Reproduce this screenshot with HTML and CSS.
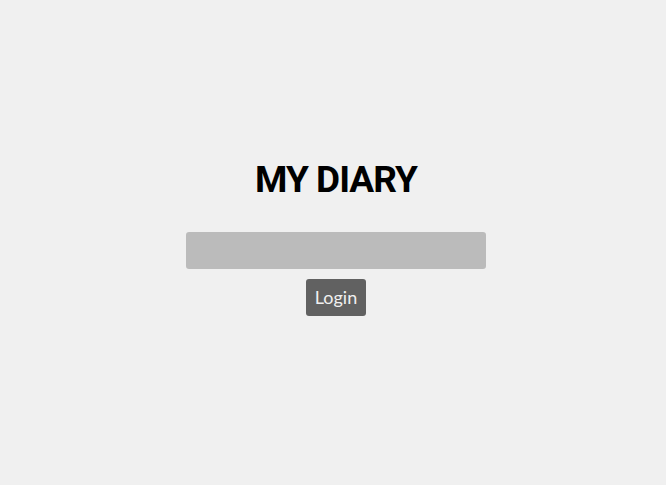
FILE: index.html
```html
<!DOCTYPE html>
<html>
<head>
<meta charset="utf-8">
<link rel="stylesheet" href="styles.css">
</head>
<body>
<main class="page">
  <h1 class="title">MY DIARY</h1>
  <form class="login">
    <input class="password" type="password">
    <button class="btn" type="button">Login</button>
  </form>
</main>
</body>
</html>
```
FILE: styles.css
```css
html, body {
  margin: 0;
  padding: 0;
  background: #f0f0f0;
  height: 100%;
}
.page {
  height: 485px;
  box-sizing: border-box;
  padding: 0 0 12px 6px;
  display: flex;
  flex-direction: column;
  align-items: center;
  justify-content: center;
  font-family: "Roboto", "Noto Sans", sans-serif;
}
.title {
  margin: 0 0 30px;
  font-size: 37px;
  font-weight: 700;
  line-height: 44px;
  color: #000;
  letter-spacing: -1px;
}
.login {
  display: flex;
  flex-direction: column;
  align-items: center;
  gap: 10px;
}
.password {
  width: 300px;
  height: 37px;
  box-sizing: border-box;
  border: none;
  border-radius: 3px;
  background: #bbbbbb;
  margin: 0;
}
.btn {
  width: 60px;
  height: 37px;
  border: none;
  border-radius: 3px;
  background: #616161;
  color: #f0f0f0;
  font-family: "Lato", "Noto Sans", sans-serif;
  font-size: 18px;
  padding: 0;
}
```
